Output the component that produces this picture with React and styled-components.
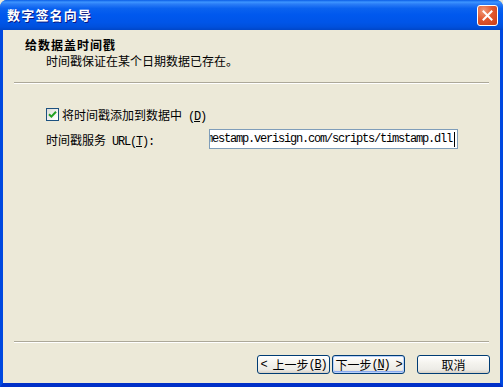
import React from "react";
import styled, { createGlobalStyle } from "styled-components";

const Global = createGlobalStyle`
  html, body { margin: 0; padding: 0; background: #ece9d8; }
  body { font-family: "Noto Sans CJK SC", "Liberation Sans", sans-serif; font-size: 12px; }
`;

const Window = styled.div`
  width: 503px;
  height: 387px;
  display: flex;
  flex-direction: column;
  background: #0055e5;
  border-radius: 7px 7px 0 0;
  overflow: hidden;
`;

const TitleBar = styled.div`
  height: 30px;
  flex: none;
  display: flex;
  align-items: center;
  justify-content: space-between;
  padding: 0 5px 0 7px;
  box-sizing: border-box;
  background: linear-gradient(
    to bottom,
    #0a5de6 0%,
    #3d95ff 7%,
    #2a7cf6 14%,
    #0a62ef 28%,
    #0058ee 50%,
    #0055e8 75%,
    #0050dc 90%,
    #0046c8 100%
  );
`;

const Title = styled.span`
  color: #fff;
  font-weight: bold;
  font-size: 13px;
  letter-spacing: 1.2px;
  text-shadow: 1px 1px 0 #0a1883;
  margin-top: -1px;
`;

const CloseButton = styled.div`
  width: 21px;
  height: 21px;
  box-sizing: border-box;
  border: 1px solid #fff;
  border-radius: 3px;
  background: radial-gradient(circle at 30% 25%, #f09a78 0%, #e2582e 45%, #c83c18 100%);
  display: flex;
  align-items: center;
  justify-content: center;
  margin-top: 1px;
`;

const Body = styled.div`
  flex: 1;
  display: flex;
  flex-direction: column;
  background: #ece9d8;
  border-left: 3px solid #0048e0;
  border-right: 3px solid #0048e0;
  border-bottom: 4px solid #0030c8;
`;

const Header = styled.div`
  padding: 8px 0 0 22px;
  display: flex;
  flex-direction: column;
  gap: 2px;
`;

const HeaderTitle = styled.div`
  font-weight: bold;
  font-size: 12px;
  line-height: 14px;
  height: 14px;
  letter-spacing: 1px;
  color: #000;
`;

const HeaderSub = styled.div`
  font-size: 12px;
  line-height: 14px;
  height: 14px;
  padding-left: 21px;
  color: #000;
`;

const Ascii = styled.span`
  font-family: "Liberation Mono", "DejaVu Sans Mono", monospace;
  font-size: 12px;
  letter-spacing: -1.2px;
  white-space: pre;
`;

const Separator = styled.div`
  height: 0;
  margin: ${(p) => p.$top}px 11px 0 11px;
  border-top: 1px solid #aca899;
  border-bottom: 1px solid #fff;
`;

const Content = styled.div`
  padding: 24px 0 0 43px;
  display: flex;
  flex-direction: column;
  gap: 8px;
`;

const CheckRow = styled.label`
  display: flex;
  align-items: center;
  height: 13px;
  gap: 3px;
  font-size: 12px;
  color: #000;
`;

const Box = styled.span`
  width: 13px;
  height: 13px;
  box-sizing: border-box;
  border: 1px solid #1c5180;
  background: linear-gradient(135deg, #dcdcd7 0%, #fff 90%);
  display: flex;
  align-items: center;
  justify-content: center;
`;

const FieldRow = styled.div`
  display: flex;
  align-items: center;
  height: 20px;
`;

const FieldLabel = styled.span`
  width: 163px;
  flex: none;
  font-size: 12px;
  color: #000;
  padding-top: 2px;
`;

const TextBox = styled.div`
  width: 249px;
  height: 20px;
  box-sizing: border-box;
  border: 1px solid #7f9db9;
  background: #fff;
  display: flex;
  justify-content: flex-end;
  align-items: center;
  overflow: hidden;
  white-space: nowrap;
  padding-right: 2px;
`;

const TextValue = styled.span`
  font-family: "Liberation Mono", "DejaVu Sans Mono", monospace;
  font-size: 12px;
  letter-spacing: -1.2px;
  color: #000;
  flex: none;
`;

const Caret = styled.span`
  width: 1px;
  height: 15px;
  background: #000;
  flex: none;
  margin-left: 2px;
`;

const Spacer = styled.div`
  flex: 1;
`;

const ButtonRow = styled.div`
  display: flex;
  justify-content: flex-end;
  padding: 12px 10px 9px 0;
`;

const Button = styled.div`
  width: 73px;
  height: 19px;
  box-sizing: border-box;
  margin-left: ${(p) => p.$gap}px;
  border: 1px solid #003c74;
  border-radius: 3px;
  background: linear-gradient(to bottom, #ffffff 0%, #f5f4ef 40%, #ecebe6 80%, #d6d0c5 100%);
  box-shadow: ${(p) =>
    p.$default
      ? "inset 0 0 0 1px #b9d1fa, inset 0 -1px 0 1px #8aaaf0"
      : "none"};
  display: flex;
  align-items: center;
  justify-content: center;
  font-size: 12px;
  color: #000;
  white-space: nowrap;
`;

export default function App() {
  return (
    <>
      <Global />
      <Window>
        <TitleBar>
          <Title>数字签名向导</Title>
          <CloseButton>
            <svg width="11" height="11" viewBox="0 0 11 11">
              <path d="M1.5 1.5 L9.5 9.5 M9.5 1.5 L1.5 9.5" stroke="#fff" strokeWidth="2" strokeLinecap="square" />
            </svg>
          </CloseButton>
        </TitleBar>
        <Body>
          <Header>
            <HeaderTitle>给数据盖时间戳</HeaderTitle>
            <HeaderSub>时间戳保证在某个日期数据已存在。</HeaderSub>
          </Header>
          <Separator $top={14} />
          <Content>
            <CheckRow>
              <Box>
                <svg width="9" height="9" viewBox="0 0 9 9">
                  <path d="M1 4.2 L3.4 6.6 L8 1.8" fill="none" stroke="#21a121" strokeWidth="2" />
                </svg>
              </Box>
              <span>
                将时间戳添加到数据中<Ascii> (<u>D</u>)</Ascii>
              </span>
            </CheckRow>
            <FieldRow>
              <FieldLabel>
                时间戳服务<Ascii> URL(<u>T</u>):</Ascii>
              </FieldLabel>
              <TextBox>
                <TextValue>http://timestamp.verisign.com/scripts/timstamp.dll</TextValue>
                <Caret />
              </TextBox>
            </FieldRow>
          </Content>
          <Spacer />
          <Separator $top={0} />
          <ButtonRow>
            <Button $gap={0}>
              <Ascii>&lt; </Ascii>上一步<Ascii>(<u>B</u>)</Ascii>
            </Button>
            <Button $gap={2} $default>
              下一步<Ascii>(<u>N</u>) &gt;</Ascii>
            </Button>
            <Button $gap={12}>取消</Button>
          </ButtonRow>
        </Body>
      </Window>
    </>
  );
}
